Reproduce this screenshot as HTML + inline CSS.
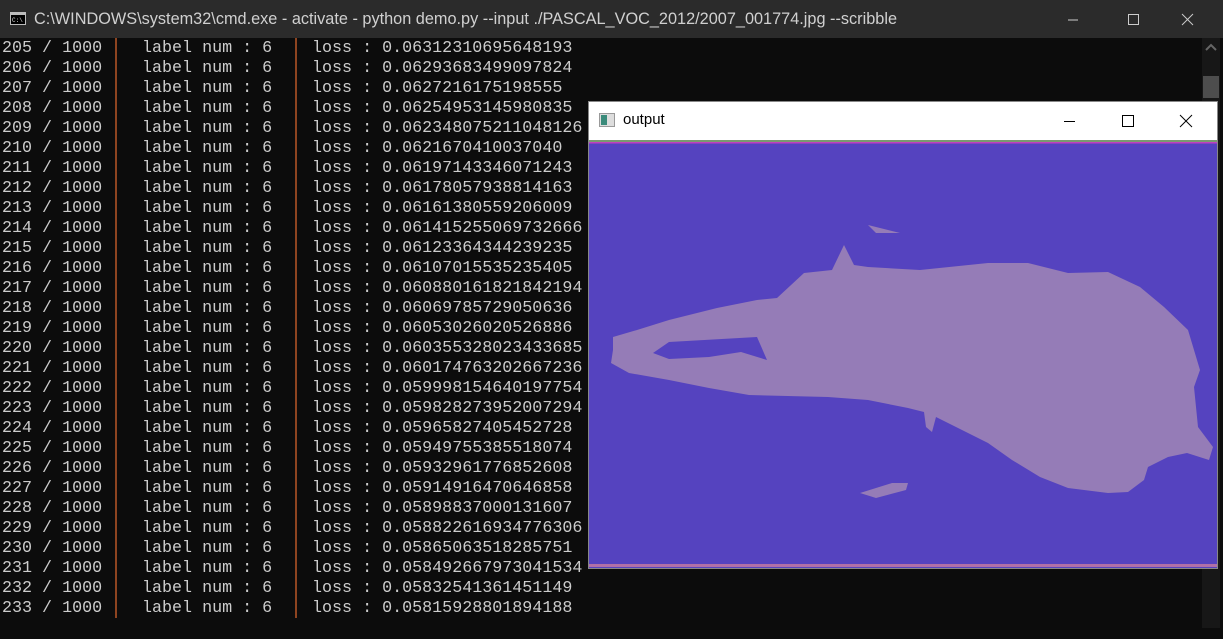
<!DOCTYPE html>
<html><head><meta charset="utf-8"><style>
*{margin:0;padding:0}
body{width:1223px;height:639px;overflow:hidden;background:#0c0c0c;position:relative;font-family:"Liberation Mono",monospace}
#tb{position:absolute;left:0;top:0;width:1223px;height:38px;background:#2b2b2b;color:#d0d0d0;font:16.3px "Liberation Sans",sans-serif}
#tb .t{position:absolute;left:34px;top:10px;white-space:nowrap}
.col{position:absolute;top:39px;color:#cccccc;font-size:16.7px;line-height:20px;white-space:pre}
.sep{position:absolute;top:38px;width:2px;height:580px;background:#8e4420}
#sb{position:absolute;left:1202px;top:38px;width:18px;height:590px;background:#171717}
#win{position:absolute;left:588px;top:101px;width:628px;height:466px;background:#fff;border:1px solid #888}
#win .t{position:absolute;left:34px;top:9px;font:15px "Liberation Sans",sans-serif;color:#000}
</style></head><body>
<div id="tb">
<svg style="position:absolute;left:10px;top:12px" width="16" height="13"><rect x=".5" y=".5" width="15" height="12" fill="#000" stroke="#bbb"/><rect x="1" y="1" width="14" height="2" fill="#bbb"/><text x="2" y="10" font-size="6" fill="#ddd" font-family="Liberation Mono">C:\</text></svg>
<div class="t">C:\WINDOWS\system32\cmd.exe - activate - python  demo.py --input ./PASCAL_VOC_2012/2007_001774.jpg --scribble</div>
<svg style="position:absolute;left:1068px;top:12px" width="140" height="16" stroke="#ccc" fill="none"><line x1="0" y1="8" x2="10" y2="8"/><rect x="60.5" y="2.5" width="10" height="10"/><line x1="114" y1="2" x2="125" y2="13"/><line x1="125" y1="2" x2="114" y2="13"/></svg>
</div>
<div class="col" style="left:2px">205 / 1000
206 / 1000
207 / 1000
208 / 1000
209 / 1000
210 / 1000
211 / 1000
212 / 1000
213 / 1000
214 / 1000
215 / 1000
216 / 1000
217 / 1000
218 / 1000
219 / 1000
220 / 1000
221 / 1000
222 / 1000
223 / 1000
224 / 1000
225 / 1000
226 / 1000
227 / 1000
228 / 1000
229 / 1000
230 / 1000
231 / 1000
232 / 1000
233 / 1000</div>
<div class="sep" style="left:115px"></div>
<div class="sep" style="left:295px"></div>
<div class="col" style="left:142px">label num : 6
label num : 6
label num : 6
label num : 6
label num : 6
label num : 6
label num : 6
label num : 6
label num : 6
label num : 6
label num : 6
label num : 6
label num : 6
label num : 6
label num : 6
label num : 6
label num : 6
label num : 6
label num : 6
label num : 6
label num : 6
label num : 6
label num : 6
label num : 6
label num : 6
label num : 6
label num : 6
label num : 6
label num : 6</div>
<div class="col" style="left:312px">loss : 0.06312310695648193
loss : 0.06293683499097824
loss : 0.0627216175198555
loss : 0.06254953145980835
loss : 0.062348075211048126
loss : 0.0621670410037040
loss : 0.06197143346071243
loss : 0.06178057938814163
loss : 0.06161380559206009
loss : 0.061415255069732666
loss : 0.06123364344239235
loss : 0.06107015535235405
loss : 0.060880161821842194
loss : 0.06069785729050636
loss : 0.06053026020526886
loss : 0.060355328023433685
loss : 0.060174763202667236
loss : 0.059998154640197754
loss : 0.059828273952007294
loss : 0.05965827405452728
loss : 0.05949755385518074
loss : 0.05932961776852608
loss : 0.05914916470646858
loss : 0.05898837000131607
loss : 0.058822616934776306
loss : 0.05865063518285751
loss : 0.058492667973041534
loss : 0.05832541361451149
loss : 0.05815928801894188</div>
<div id="sb"><svg width="18" height="20"><polyline points="4,12 9,7 14,12" fill="none" stroke="#666" stroke-width="2"/></svg><div style="position:absolute;left:1px;top:38px;width:16px;height:22px;background:#4d4d4d"></div></div>
<div id="win">
<svg style="position:absolute;left:10px;top:11px" width="16" height="14"><rect x=".5" y=".5" width="15" height="13" fill="#ddd" stroke="#999"/><rect x="2" y="2" width="6" height="10" fill="#3a8a7a"/></svg>
<div class="t">output</div>
<svg style="position:absolute;left:475px;top:12px" width="140" height="16" stroke="#000" fill="none"><line x1="0" y1="7.5" x2="11" y2="7.5"/><rect x="58.5" y="1.5" width="11" height="11"/><line x1="116" y1="1" x2="128" y2="13"/><line x1="128" y1="1" x2="116" y2="13"/></svg>
<svg style="position:absolute;left:0;top:38px" width="628" height="428" viewBox="589 140 628 428">
<rect x="589" y="140" width="628" height="428" fill="#5543bf"/>
<rect x="589" y="140" width="628" height="2" fill="#7a9a70"/><rect x="589" y="142" width="628" height="1.5" fill="#c040c0"/>
<rect x="589" y="564" width="628" height="3" fill="#b070a8"/>
<path fill="#957cb7" fill-rule="evenodd" d="M613 337 637 330 669 320 717 308 757 300 777 298 804 273 832 270 844 245 854 265 868 267 920 270 988 263 1028 263 1068 273 1108 272 1140 287 1164 307 1188 330 1200 370 1194 387 1198 427 1213 447 1209 460 1187 453 1168 457 1148 467 1144 480 1128 492 1108 493 1068 488 1040 477 1012 460 988 443 948 423 936 417 932 432 926 427 924 412 908 408 868 400 828 397 749 395 709 388 669 380 629 373 611 363 613 350Z M653 353 669 342 757 337 767 360 741 352 709 357 669 359Z"/>
<path fill="#957cb7" d="M860 493 892 483 908 483 906 490 876 498Z M868 225 900 233 876 233Z"/>
</svg>
</div>
</body></html>
